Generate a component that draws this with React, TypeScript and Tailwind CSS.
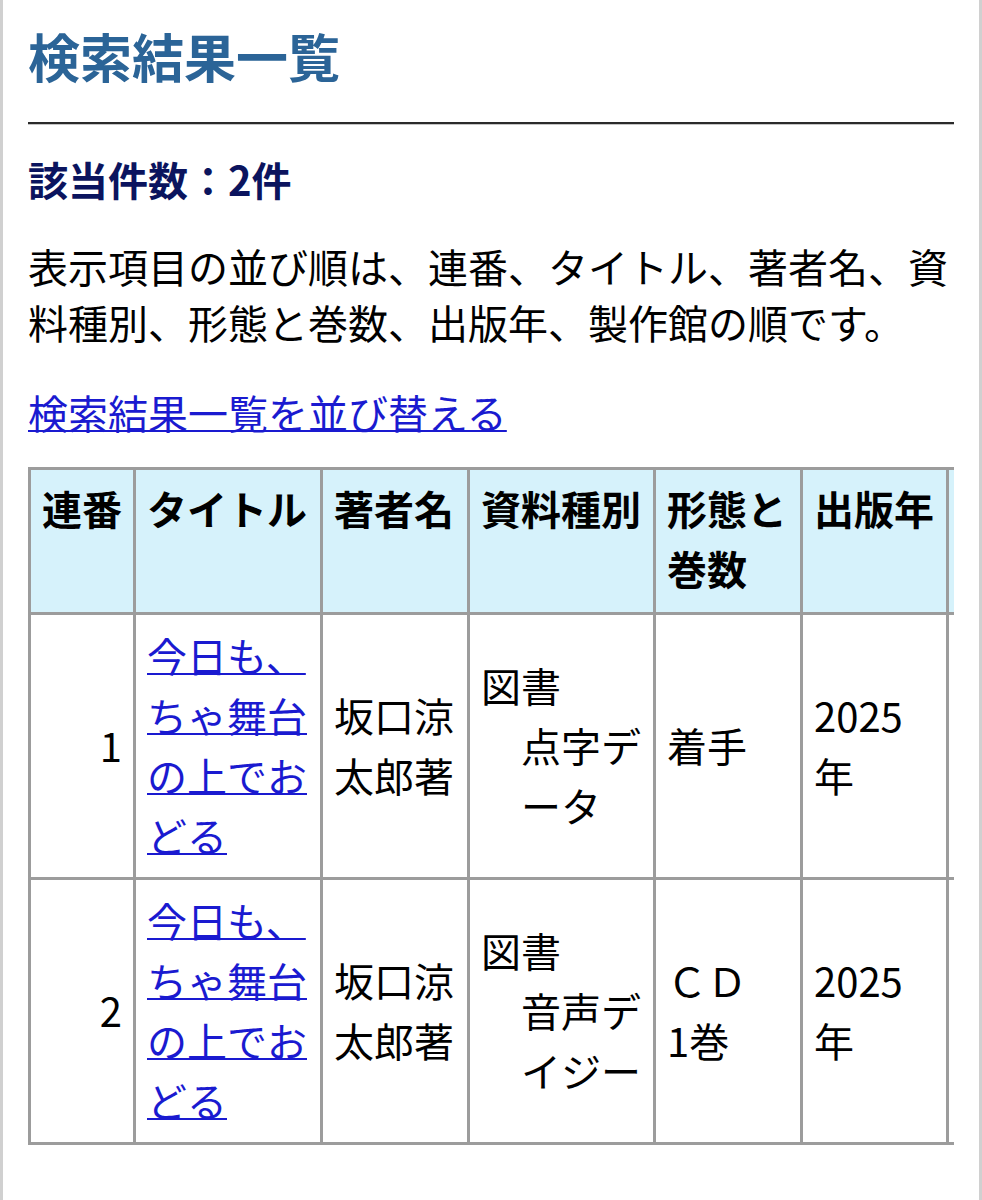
import React from 'react';

type Row = {
  no: number;
  title: string;
  author: string;
  kind: string;
  medium: string;
  form: string[];
  year: string;
};

const rows: Row[] = [
  {
    no: 1,
    title: '今日も、ちゃ舞台の上でおどる',
    author: '坂口涼太郎著',
    kind: '図書',
    medium: '点字データ',
    form: ['着手'],
    year: '2025年',
  },
  {
    no: 2,
    title: '今日も、ちゃ舞台の上でおどる',
    author: '坂口涼太郎著',
    kind: '図書',
    medium: '音声デイジー',
    form: ['ＣＤ', '1巻'],
    year: '2025年',
  },
];

const headers = ['連番', 'タイトル', '著者名', '資料種別', '形態と巻数', '出版年', '製作館'];
const colWidths = ['w-[105px]', 'w-[187px]', 'w-[147px]', 'w-[186px]', 'w-[147px]', 'w-[146px]', 'w-[147px]'];

const th = 'align-top text-left font-bold px-[11px] pt-[8px] pb-[14px] bg-[#d6f2fb] border-r-[3px] border-b-[3px] border-[#9c9c9c]';
const td = 'align-middle px-[11px] pt-[10px] pb-[12px] border-r-[3px] border-b-[3px] border-[#9c9c9c]';

export default function App() {
  return (
    <div
      className="min-h-[1200px] bg-white border-x-[3px] border-[#d0d0d0] px-[25px] pt-[25px] text-black"
      style={{ fontFamily: '"Noto Sans CJK JP", sans-serif' }}
    >
      <h1 className="text-[52px] leading-[62px] font-bold text-[#2b6497]">検索結果一覧</h1>
      <div className="mt-[35px] border-t-2 border-t-[#2a2a2a] border-b border-b-[#c4c4c4]" />

      <h2 className="mt-[26px] text-[40px] leading-[56px] font-bold text-[#0b145e]">該当件数：2件</h2>

      <p className="mt-[31px] text-[40px] leading-[56px]">
        表示項目の並び順は、連番、タイトル、著者名、資料種別、形態と巻数、出版年、製作館の順です。
      </p>

      <p className="mt-[34px] text-[40px] leading-[56px]">
        <a href="#" className="text-[#1a1ad0] underline decoration-2">
          検索結果一覧を並び替える
        </a>
      </p>

      {/* 一覧表（横にはみ出す分は切れる） */}
      <div className="mt-[27px] overflow-hidden">
        <table className="table-fixed w-[1068px] border-separate border-spacing-0 border-l-[3px] border-t-[3px] border-[#9c9c9c] text-[40px] leading-[60px]">
          <colgroup>
            {colWidths.map((w, i) => (
              <col key={i} className={w} />
            ))}
          </colgroup>
          <thead>
            <tr>
              {headers.map((h) => (
                <th key={h} className={th}>
                  {h}
                </th>
              ))}
            </tr>
          </thead>
          <tbody>
            {rows.map((r) => (
              <tr key={r.no}>
                <td className={`${td} text-right`}>{r.no}</td>
                <td className={td}>
                  <a href="#" className="text-[#1a1ad0] underline decoration-2">
                    {r.title}
                  </a>
                </td>
                <td className={td}>{r.author}</td>
                <td className={td}>
                  <div>{r.kind}</div>
                  <div className="pl-[40px]">{r.medium}</div>
                </td>
                <td className={td}>
                  {r.form.map((f) => (
                    <div key={f}>{f}</div>
                  ))}
                </td>
                <td className={td}>{r.year}</td>
                <td className={td}></td>
              </tr>
            ))}
          </tbody>
        </table>
      </div>
    </div>
  );
}
